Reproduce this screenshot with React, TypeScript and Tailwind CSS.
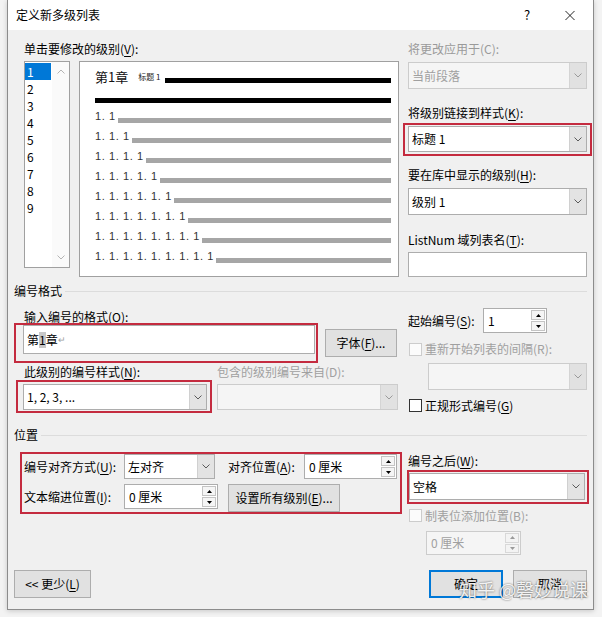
import React from 'react';

const Acc = ({ c }: { c: string }) => <span className="underline underline-offset-[2px] decoration-[1px]">{c}</span>;

function Chevron({ color = '#5a5a5a', up = false }: { color?: string; up?: boolean }) {
  return (
    <svg width="8" height="5" viewBox="0 0 8 5">
      <path d={up ? 'M0.5 4.5 L4 1 L7.5 4.5' : 'M0.5 0.5 L4 4 L7.5 0.5'} fill="none" stroke={color} strokeWidth="1" />
    </svg>
  );
}

function Tri({ up, color = '#000' }: { up: boolean; color?: string }) {
  return (
    <svg width="5" height="3" viewBox="0 0 5 3">
      <polygon points={up ? '0,3 2.5,0 5,3' : '0,0 5,0 2.5,3'} fill={color} />
    </svg>
  );
}

function Select({ text = '', className = '', disabled = false }: { text?: string; className?: string; disabled?: boolean }) {
  return (
    <div className={`flex items-stretch border ${disabled ? 'border-[#cccccc] bg-[#f5f5f5]' : 'border-[#adadad] bg-white'} ${className}`}>
      <div className={`flex-1 flex items-center pl-[3px] text-[12px] ${disabled ? 'text-[#a0a0a0]' : 'text-black'}`}>{text}</div>
      <div className={`w-[17px] flex items-center justify-center ${disabled ? 'bg-[#e1e1e1] border-l border-[#d4d4d4]' : 'bg-[#e3e3e3] border-l border-[#d0d0d0]'}`}>
        <Chevron color={disabled ? '#9a9a9a' : '#5a5a5a'} />
      </div>
    </div>
  );
}

function Spinner({ text = '', className = '', disabled = false }: { text?: string; className?: string; disabled?: boolean }) {
  return (
    <div className={`flex items-stretch border ${disabled ? 'border-[#cccccc] bg-[#f5f5f5]' : 'border-[#adadad] bg-white'} ${className}`}>
      <div className={`flex-1 flex items-center pl-[4px] text-[12px] ${disabled ? 'text-[#a0a0a0]' : 'text-black'}`}>{text}</div>
      <div className="w-[15px] flex flex-col py-[1px] pr-[1px] gap-px">
        <div className={`flex-1 flex items-center justify-center border ${disabled ? 'border-[#d8d8d8] bg-[#f3f3f3]' : 'border-[#c4c4c4] bg-[#f5f5f5]'}`}>
          <Tri up color={disabled ? '#9a9a9a' : '#000'} />
        </div>
        <div className={`flex-1 flex items-center justify-center border ${disabled ? 'border-[#d8d8d8] bg-[#f3f3f3]' : 'border-[#c4c4c4] bg-[#f5f5f5]'}`}>
          <Tri up={false} color={disabled ? '#9a9a9a' : '#000'} />
        </div>
      </div>
    </div>
  );
}

function Checkbox({ disabled = false, className = '' }: { disabled?: boolean; className?: string }) {
  return <div className={`w-[13px] h-[13px] border ${disabled ? 'border-[#cccccc] bg-[#fbfbfb]' : 'border-[#333333] bg-white'} ${className}`} />;
}

function Btn({ children, className = '', primary = false }: { children: React.ReactNode; className?: string; primary?: boolean }) {
  return (
    <div className={`flex items-center justify-center bg-[#e1e1e1] text-[12px] ${primary ? 'border-2 border-[#0078d7]' : 'border border-[#adadad]'} ${className}`}>
      {children}
    </div>
  );
}

export default function App() {
  const rows = [2, 3, 4, 5, 6, 7, 8, 9].map((n) => Array(n).fill('1').join('. '));
  const levels = [1, 2, 3, 4, 5, 6, 7, 8, 9];
  return (
    <div className="relative w-[602px] h-[617px] overflow-hidden bg-[#f3f3f3] font-['Microsoft_YaHei_UI','Noto_Sans_CJK_SC',sans-serif] text-[12px] leading-[16px] text-black">
      <div className="ml-[7px] w-[587px] h-[610px] border-x border-b border-[#8c8c8c] bg-[#f0f0f0] flex flex-col shadow-[0_1px_5px_rgba(0,0,0,0.18)]">
        {/* Title bar */}
        <div className="h-[30px] bg-white flex items-center pl-[8px]">
          <span className="text-[12px]">定义新多级列表</span>
          <span className="ml-auto w-[10px] text-center text-[13px]">?</span>
          <div className="ml-[33px] mr-[18px] w-[10px] h-[10px] flex items-center justify-center">
            <svg width="11" height="11" viewBox="0 0 11 11">
              <path d="M0.5 0.5 L10.5 10.5 M10.5 0.5 L0.5 10.5" stroke="#111" strokeWidth="1" />
            </svg>
          </div>
        </div>

        {/* Section A */}
        <div className="flex mt-[11px] ml-[16px]">
          <div className="w-[375px] flex flex-col">
            <div className="h-[16px]">单击要修改的级别(<Acc c="V" />):</div>
            <div className="flex mt-[4px] items-start">
              <div className="w-[46px] h-[207px] border border-[#a0a0a0] bg-white flex">
                <div className="w-[27px] pt-[1px] flex flex-col">
                  {levels.map((n) => (
                    <div
                      key={n}
                      className={`h-[17px] pl-[2px] text-[12px] leading-[17px] ${n === 1 ? 'w-[26px] bg-[#0078d7] text-white' : 'text-black'}`}
                    >
                      {n}
                    </div>
                  ))}
                </div>
                <div className="flex-1 flex flex-col items-center justify-between pt-[7px] pb-[7px] bg-[#fafafa]">
                  <Chevron up color="#b4b4b4" />
                  <Chevron color="#b4b4b4" />
                </div>
              </div>
              <div className="ml-[9px] w-[320px] h-[216px] border border-[#a0a0a0] bg-white flex flex-col pl-[15px] pr-[7px] pt-[5px]">
                <div className="h-[20px] flex items-center">
                  <span className="text-[13px] text-[#111]">第1章</span>
                  <span className="ml-[10px] text-[8px] text-[#222]">标题 1</span>
                  <div className="ml-[5px] mt-[6px] flex-1 h-[5px] bg-black" />
                </div>
                <div className="mt-[11px] h-[5px] bg-black" />
                <div className="mt-[3px] flex flex-col">
                  {rows.map((r) => (
                    <div key={r} className="h-[20px] flex items-center gap-[2px]">
                      <span className="font-['Liberation_Sans',sans-serif] text-[11px] tracking-[0.6px] text-[#333]">{r}</span>
                      <div className="mt-[8px] flex-1 h-[5px] bg-[#a6a6a6]" />
                    </div>
                  ))}
                </div>
              </div>
            </div>
          </div>
          <div className="ml-[9px] w-[179px] flex flex-col">
            <div className="h-[16px] text-[#9a9a9a]">将更改应用于(C):</div>
            <Select disabled text="当前段落" className="mt-[5px] w-[179px] h-[27px]" />
            <div className="mt-[16px] h-[16px]">将级别链接到样式(<Acc c="K" />):</div>
            <div className="mt-[2px] ml-[-5px] w-[189px] h-[33px] border-2 border-[#c42b3f] pl-[3px] pt-[1px]">
              <Select text="标题 1" className="w-[179px] h-[26px]" />
            </div>
            <div className="mt-[11px] h-[16px]">要在库中显示的级别(<Acc c="H" />):</div>
            <Select text="级别 1" className="mt-[5px] w-[179px] h-[27px]" />
            <div className="mt-[17px] h-[16px]">ListNum 域列表名(<Acc c="T" />):</div>
            <div className="mt-[4px] w-[179px] h-[25px] border border-[#adadad] bg-white" />
          </div>
        </div>

        {/* 编号格式 heading */}
        <div className="mt-[6px] mx-[6px] h-[16px] flex items-center">
          <span>编号格式</span>
          <div className="ml-[3px] flex-1 h-px bg-[#dcdcdc]" />
        </div>

        {/* Format group */}
        <div className="flex ml-[6px]">
          <div className="w-[384px] flex flex-col">
            <div className="mt-[10px] ml-[10px] h-[16px]">输入编号的格式(O):</div>
            <div className="mt-[-2px] flex items-start">
              <div className="w-[304px] h-[40px] border-2 border-[#c42b3f] pl-[7px] pr-[1px]">
                <div className="h-[29px] border border-[#adadad] bg-white flex items-center pl-[3px] text-[12px]">
                  <span>第</span>
                  <span className="bg-[#c8c8c8]">1</span>
                  <span>章</span>
                  <span className="text-[#a0a0a0] text-[9px] leading-[12px]">↵</span>
                </div>
              </div>
              <Btn className="ml-[7px] mt-[6px] w-[72px] h-[28px]">
                字体(<Acc c="F" />)...
              </Btn>
            </div>
            <div className="mt-[1px] h-[16px] flex">
              <div className="ml-[10px] w-[193px]">此级别的编号样式(<Acc c="N" />):</div>
              <div className="text-[#a0a0a0]">包含的级别编号来自(D):</div>
            </div>
            <div className="flex items-start">
              <div className="ml-[2px] w-[196px] h-[33px] border-2 border-[#c42b3f] pl-[5px] pt-[2px]">
                <Select text="1, 2, 3, ..." className="w-[184px] h-[26px]" />
              </div>
              <Select disabled className="ml-[5px] mt-[4px] w-[181px] h-[26px]" />
            </div>
          </div>
          <div className="ml-[10px] w-[179px] flex flex-col">
            <div className="mt-[9px] h-[25px] flex items-center">
              <div className="w-[75px]">起始编号(<Acc c="S" />):</div>
              <Spinner text="1" className="w-[64px] h-[25px]" />
            </div>
            <div className="mt-[9px] h-[14px] flex items-center">
              <Checkbox disabled className="ml-[1px]" />
              <span className="ml-[3px] text-[#a0a0a0]">重新开始列表的间隔(R):</span>
            </div>
            <Select disabled className="ml-[20px] mt-[7px] w-[159px] h-[27px]" />
            <div className="mt-[9px] h-[13px] flex items-center">
              <Checkbox className="ml-[1px]" />
              <span className="ml-[3px]">正规形式编号(<Acc c="G" />)</span>
            </div>
          </div>
        </div>

        {/* 位置 heading */}
        <div className="mt-[14px] mx-[6px] h-[16px] flex items-center">
          <span>位置</span>
          <div className="ml-[3px] flex-1 h-px bg-[#dcdcdc]" />
        </div>

        {/* Position group */}
        <div className="flex ml-[6px]">
          <div className="ml-[6px] mt-[9px] w-[382px] h-[62px] border-2 border-[#c42b3f] flex flex-col">
            <div className="h-[25px] flex items-center">
              <div className="ml-[2px] w-[100px]">编号对齐方式(<Acc c="U" />):</div>
              <Select text="左对齐" className="w-[91px] h-[25px]" />
              <div className="ml-[13px] w-[76px]">对齐位置(<Acc c="A" />):</div>
              <Spinner text="0 厘米" className="w-[93px] h-[25px]" />
            </div>
            <div className="mt-[5px] flex items-start">
              <div className="ml-[2px] w-[100px] h-[25px] flex items-center">文本缩进位置(<Acc c="I" />):</div>
              <Spinner text="0 厘米" className="w-[94px] h-[25px]" />
              <Btn className="ml-[10px] w-[112px] h-[28px]">
                设置所有级别(<Acc c="E" />)...
              </Btn>
            </div>
          </div>
          <div className="ml-[6px] w-[179px] flex flex-col">
            <div className="mt-[10px] h-[16px]">编号之后(<Acc c="W" />):</div>
            <div className="mt-[1px] ml-[-1px] w-[182px] h-[34px] border-2 border-[#c42b3f] pt-[1px]">
              <Select text="空格" className="w-[176px] h-[27px]" />
            </div>
            <div className="mt-[5px] h-[13px] flex items-center">
              <Checkbox disabled className="ml-[1px]" />
              <span className="ml-[3px] text-[#a0a0a0]">制表位添加位置(B):</span>
            </div>
            <Spinner disabled text="0 厘米" className="ml-[18px] mt-[9px] w-[95px] h-[24px]" />
          </div>
        </div>

        {/* Buttons */}
        <div className="mt-[15px] mx-[6px] flex">
          <Btn className="w-[77px] h-[28px]">
            &lt;&lt; 更少(<Acc c="L" />)
          </Btn>
          <Btn primary className="ml-auto w-[74px] h-[28px]">
            确定
          </Btn>
          <Btn className="ml-[10px] w-[74px] h-[28px]">取消</Btn>
        </div>
      </div>

      {/* Watermark */}
      <div className="absolute left-[459px] top-[577px] text-[18px] leading-[24px] text-white/90 whitespace-nowrap [text-shadow:0_0_2px_rgba(0,0,0,0.7)]">
        知乎 @磬妙说课
      </div>
    </div>
  );
}
